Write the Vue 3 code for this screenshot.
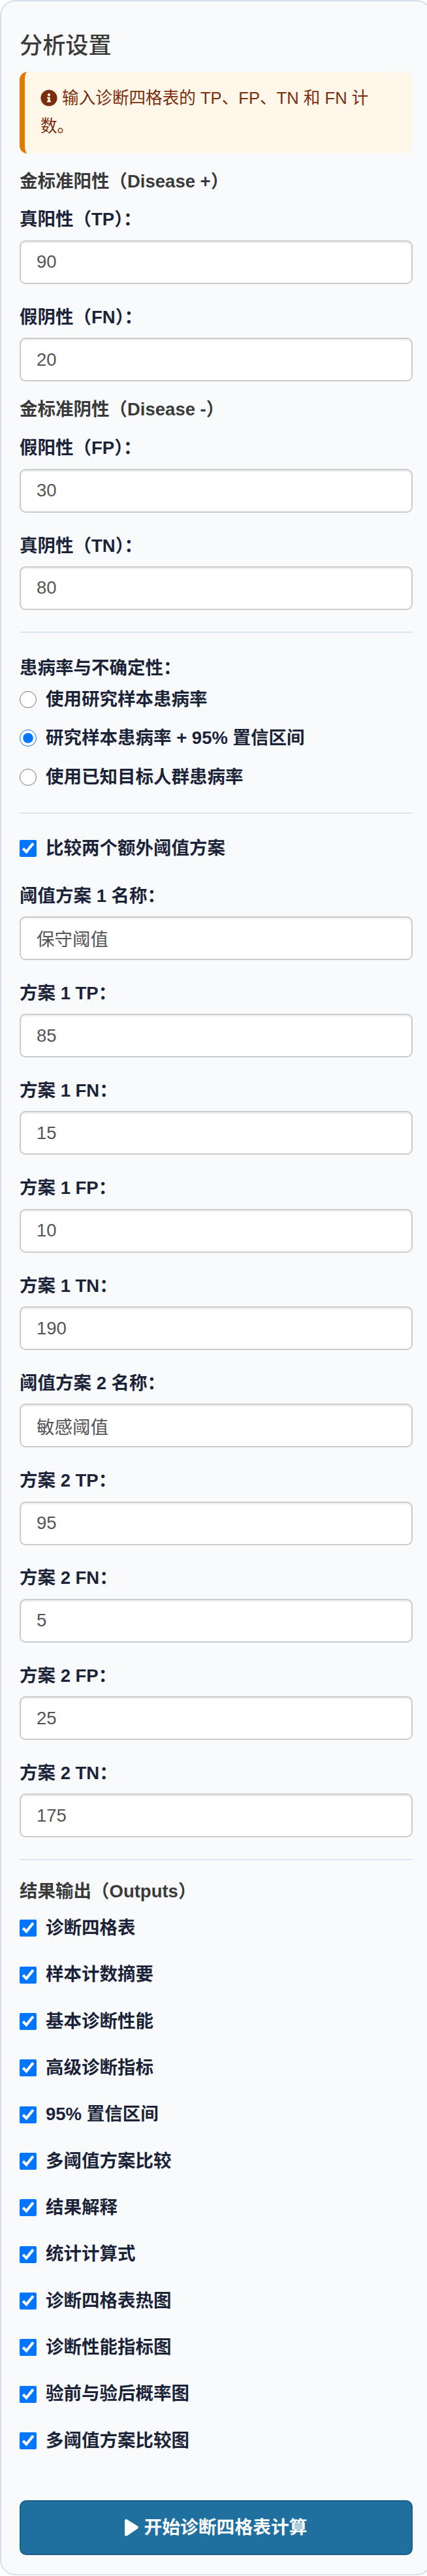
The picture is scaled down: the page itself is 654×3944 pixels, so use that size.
<script setup>
const firstGroups = [
  { heading: '金标准阳性（Disease +）', fields: [['真阳性（TP）：', '90'], ['假阴性（FN）：', '20']] },
  { heading: '金标准阴性（Disease -）', fields: [['假阳性（FP）：', '30'], ['真阴性（TN）：', '80']] },
]
const radios = [
  ['使用研究样本患病率', false],
  ['研究样本患病率 + 95% 置信区间', true],
  ['使用已知目标人群患病率', false],
]
const scheme = [
  ['阈值方案 1 名称：', '保守阈值'],
  ['方案 1 TP：', '85'],
  ['方案 1 FN：', '15'],
  ['方案 1 FP：', '10'],
  ['方案 1 TN：', '190'],
  ['阈值方案 2 名称：', '敏感阈值'],
  ['方案 2 TP：', '95'],
  ['方案 2 FN：', '5'],
  ['方案 2 FP：', '25'],
  ['方案 2 TN：', '175'],
]
const outputs = ['诊断四格表', '样本计数摘要', '基本诊断性能', '高级诊断指标', '95% 置信区间', '多阈值方案比较', '结果解释', '统计计算式', '诊断四格表热图', '诊断性能指标图', '验前与验后概率图', '多阈值方案比较图']
</script>

<template>
  <div class="page">
    <div class="card">
      <h3 class="title">分析设置</h3>
      <div class="alert">
        <svg class="info" viewBox="0 0 512 512"><path fill="currentColor" d="M256 8C119 8 8 119 8 256s111 248 248 248 248-111 248-248S393 8 256 8zm0 110a42 42 0 1 1 0 84 42 42 0 0 1 0-84zm56 254c0 7-5 12-12 12h-88c-7 0-12-5-12-12v-24c0-7 5-12 12-12h12v-64h-12c-7 0-12-5-12-12v-24c0-7 5-12 12-12h64c7 0 12 5 12 12v100h12c7 0 12 5 12 12z"/></svg>
        输入诊断四格表的 TP、FP、TN 和 FN 计数。
      </div>

      <template v-for="g in firstGroups" :key="g.heading">
        <div class="section">{{ g.heading }}</div>
        <div v-for="f in g.fields" :key="f[0]" class="field">
          <label class="lbl">{{ f[0] }}</label>
          <input class="inp" type="text" :value="f[1]" />
        </div>
      </template>

      <hr class="rule rule-a" />

      <div class="lbl prev">患病率与不确定性：</div>
      <label v-for="r in radios" :key="r[0]" class="radio">
        <input type="radio" name="prev" :checked="r[1]" />
        <span>{{ r[0] }}</span>
      </label>

      <hr class="rule rule-b" />

      <label class="check compare"><input type="checkbox" checked /><span>比较两个额外阈值方案</span></label>

      <div v-for="f in scheme" :key="f[0]" class="field">
        <label class="lbl">{{ f[0] }}</label>
        <input class="inp" type="text" :value="f[1]" />
      </div>

      <hr class="rule rule-a" />

      <div class="section out">结果输出（Outputs）</div>
      <label v-for="o in outputs" :key="o" class="check"><input type="checkbox" checked /><span>{{ o }}</span></label>

      <button class="run" type="button">
        <svg class="play" viewBox="0 0 21 26"><path fill="currentColor" d="M0 2.500C0 .6 2-.6 3.700.4l16 10c1.500 1 1.500 3.200 0 4.200l-16 10.900C2 26.500 0 25.300 0 23.500z"/></svg>
        <span>开始诊断四格表计算</span>
      </button>
    </div>
  </div>
</template>

<style>
body { margin: 0; background: #fff; }
</style>

<style scoped>
.page {
  width: 654px;
  height: 3944px;
  overflow: hidden;
}
.card {
  box-sizing: border-box;
  width: 662px;
  height: 3943px;
  padding: 45px 28px 0;
  background: #f9fafc;
  border: 2px solid #d9e0ec;
  border-radius: 24px;
  font-family: "Liberation Sans", "Noto Sans CJK SC", sans-serif;
  font-size: 27.5px;
  line-height: 38.8px;
  color: #1a2338;
}
.title {
  margin: 0 0 17px;
  font-size: 35.2px;
  line-height: 46px;
  font-weight: 500;
  color: #3a3a3a;
}
.alert {
  box-sizing: border-box;
  height: 125px;
  padding: 19px 24px;
  background: #fff7ea;
  border-left: 8px solid #e07b00;
  border-radius: 12px;
  font-size: 25.6px;
  line-height: 43px;
  color: #7a2e0e;
}
.info { width: 26px; height: 26px; vertical-align: -4px; }
.section {
  margin: -7.500px 0 20px;
  font-weight: 600;
  color: #3a3a3a;
}
.alert + .section { margin-top: 23.600px; }
.field { margin-bottom: 31.900px; }
.lbl {
  display: block;
  margin-bottom: 11.600px;
  font-weight: 700;
}
.inp {
  display: block;
  box-sizing: border-box;
  width: 100%;
  height: 67px;
  padding: 0 24px;
  background: #fff;
  border: 2px solid #cccccc;
  border-radius: 9px;
  box-shadow: inset 0 2px 2px rgba(0, 0, 0, 0.075);
  font: inherit;
  font-size: 27.5px;
  color: #555;
  outline: none;
}
.rule { margin: 0; border: 0; border-top: 2px solid #dce6f2; }
.rule-a { margin-top: 33px; }
.prev { margin: 34.600px 0 8.600px; }
.radio, .check {
  display: flex;
  align-items: center;
  gap: 14px;
  font-weight: 700;
}
.radio { height: 40px; margin: 0 0 19.500px; }
.radio input, .check input { width: 26px; height: 26px; margin: 0; flex: none; }
.rule-b { margin-top: 34px; }
.check { height: 40px; margin-bottom: 31.330px; }
.compare { margin: 33px 0 33.600px; }
.section.out { margin: 28.600px 0 16.600px; }
.run {
  display: flex;
  align-items: center;
  justify-content: center;
  gap: 8px;
  box-sizing: border-box;
  width: 100%;
  height: 84px;
  margin-top: 71.330px;
  background: #1f6f9f;
  border: 2px solid #1a5f8a;
  border-radius: 10px;
  color: #fff;
  font: inherit;
  font-size: 27.8px;
  font-weight: 700;
}
.play { width: 21px; height: 26px; }
</style>
